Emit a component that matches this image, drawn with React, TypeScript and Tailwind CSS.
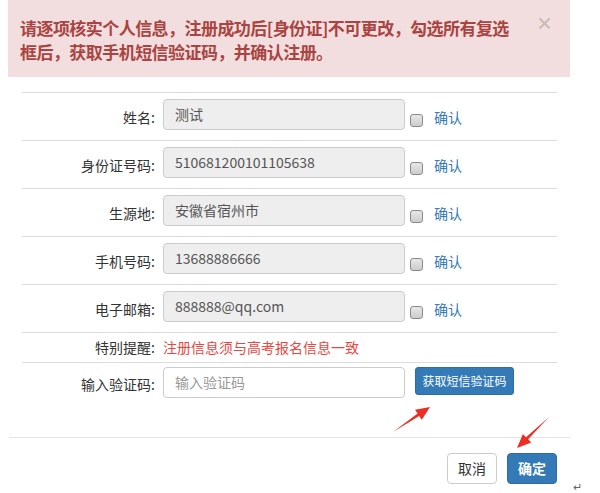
import React from "react";

const rows = [
  { label: "姓名:", value: "测试" },
  { label: "身份证号码:", value: "510681200101105638" },
  { label: "生源地:", value: "安徽省宿州市" },
  { label: "手机号码:", value: "13688886666" },
  { label: "电子邮箱:", value: "888888@qq.com" },
];

function Checkbox() {
  return (
    <div className="mt-[21px] ml-[5px] h-[13px] w-[13px] rounded-[3px] border border-[#8a8a8a] bg-gradient-to-b from-[#e8e8e8] to-[#cccccc]" />
  );
}

export default function App() {
  return (
    <div
      className="relative h-[493px] w-[600px] overflow-hidden bg-white text-[#333]"
      style={{ fontFamily: '"Noto Sans CJK SC", "Liberation Sans", sans-serif' }}
    >
      {/* alert */}
      <div className="relative ml-[8px] h-[77px] w-[562px] bg-[#f2dede] pl-[12px] pt-[16px]">
        <p className="text-[17px] font-bold leading-[24px] tracking-[-0.55px] text-[#a94442]">
          请逐项核实个人信息，注册成功后[身份证]不可更改，勾选所有复选
          <br />
          框后，获取手机短信验证码，并确认注册。
        </p>
        <span className="absolute right-[17px] top-[14px] text-[17px] font-bold leading-[18px] text-[#c9b6b6]">
          ×
        </span>
      </div>

      {/* form table */}
      <div className="ml-[22px] mt-[15px] w-[535px] text-[14px]">
        {rows.map((r) => (
          <div key={r.label} className="flex h-[48px] items-start border-t border-[#dddddd]">
            <div className="w-[133px] pt-[14px] text-right leading-[20px]">{r.label}</div>
            <div className="ml-[8px] mt-[6px] flex h-[31px] w-[242px] items-center rounded-[4px] border border-[#cccccc] bg-[#eeeeee] px-[11px] text-[#555]">
              {r.value}
            </div>
            <Checkbox />
            <div className="ml-[11px] pt-[14px] leading-[20px] text-[#337ab7]">确认</div>
          </div>
        ))}
        <div className="flex h-[30px] items-center border-t border-[#dddddd]">
          <div className="w-[133px] text-right">特别提醒:</div>
          <div className="ml-[8px] text-[#e8463f]">注册信息须与高考报名信息一致</div>
        </div>
        <div className="flex h-[75px] items-start border-t border-[#dddddd]">
          <div className="w-[133px] pt-[11px] text-right leading-[20px]">输入验证码:</div>
          <div className="ml-[8px] mt-[4px] flex h-[31px] w-[242px] items-center rounded-[4px] border border-[#cccccc] bg-white px-[11px] text-[#999]">
            输入验证码
          </div>
          <button className="ml-[10px] mt-[4px] h-[28px] w-[99px] rounded-[3px] border border-[#2e6da4] bg-[#337ab7] text-[12px] text-white">
            获取短信验证码
          </button>
        </div>
      </div>

      {/* footer */}
      <div className="ml-[9px] flex w-[561px] justify-end gap-[10px] border-t border-[#e5e5e5] pr-[13px] pt-[15px]">
        <button className="h-[31px] w-[50px] rounded-[4px] border border-[#cccccc] bg-white text-[14px] text-[#333]">
          取消
        </button>
        <button className="h-[31px] w-[50px] rounded-[4px] border border-[#2e6da4] bg-[#337ab7] text-[14px] font-bold text-white">
          确定
        </button>
      </div>
      <span className="absolute left-[573px] top-[478px] text-[11px] text-[#666]">↵</span>

      {/* annotation arrows */}
      <svg className="pointer-events-none absolute left-0 top-0" width="600" height="493">
        <polygon
          fill="#ec2e24"
          points="393,432 419.2,416 421.8,419.8 430,407 415,409.8 417.6,413.6"
        />
        <polygon
          fill="#ec2e24"
          points="549,417 528.1,439.3 531.3,442.6 517,448 522.9,434 526,437.2"
        />
      </svg>
    </div>
  );
}
